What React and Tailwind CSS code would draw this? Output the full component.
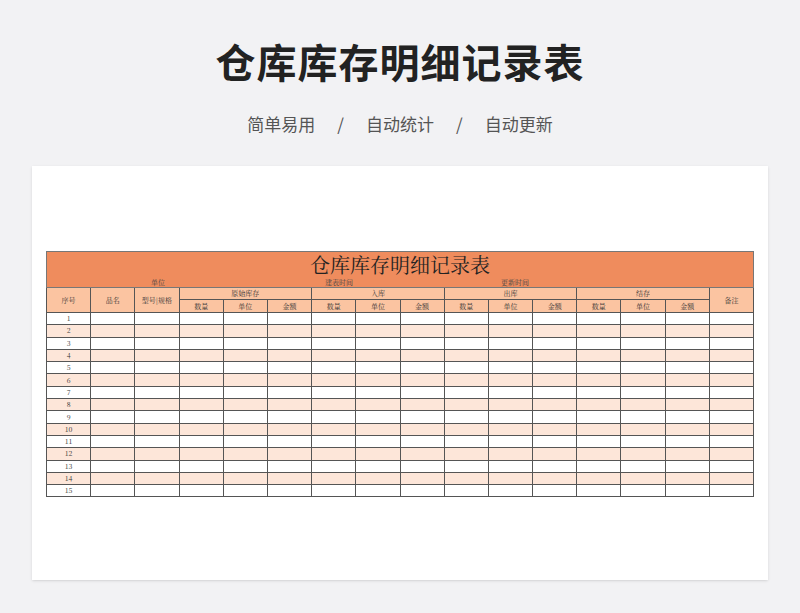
export default function App() {
  const sub = ["数量", "单位", "金额"];
  const groups = ["原始库存", "入库", "出库", "结存"];
  const cell = "border border-[#555] p-0";
  return (
    <div className="w-[800px] h-[613px] bg-[#f2f2f4] flex flex-col items-center" style={{ fontFamily: '"Noto Sans CJK SC", sans-serif' }}>
      <div className="mt-[33px] text-[40px] leading-[56px] font-bold text-[#222] tracking-[1px]">仓库库存明细记录表</div>
      <div className="mt-[23px] text-[17px] leading-[24px] text-[#555] flex gap-[22px]">
        <span>简单易用</span><span>/</span><span>自动统计</span><span>/</span><span>自动更新</span>
      </div>
      <div className="mt-[30px] w-[736px] h-[414px] bg-white shadow-sm pt-[85px] px-[14px]">
        <table className="w-[708px] border-collapse table-fixed text-[7px] text-[#333]" style={{ fontFamily: '"Noto Serif CJK SC", "Noto Sans CJK SC", serif' }}>
          <tbody>
            <tr className="h-[25px] bg-[#ef8c5d]">
              <td colSpan={16} className="border border-[#777] border-b-0 p-0 text-center text-[20px] leading-[25px] text-[#222] overflow-hidden">仓库库存明细记录表</td>
            </tr>
            <tr className="h-[10px] bg-[#ef8c5d]">
              <td colSpan={16} className="border border-[#777] border-t-0 p-0 leading-[10px]">
                <div className="flex text-[#444] h-[10px] items-center">
                  <span className="ml-[104px]">单位</span>
                  <span className="ml-[160px]">建表时间</span>
                  <span className="ml-[148px]">更新时间</span>
                </div>
              </td>
            </tr>
            <tr className="h-[12px] bg-[#fbc4a1]">
              <td rowSpan={2} className={cell + " text-center"}>序号</td>
              <td rowSpan={2} className={cell + " text-center"}>品名</td>
              <td rowSpan={2} className={cell + " text-center"}>型号|规格</td>
              {groups.map(g => <td key={g} colSpan={3} className={cell + " text-center leading-[11px]"}>{g}</td>)}
              <td rowSpan={2} className={cell + " text-center"}>备注</td>
            </tr>
            <tr className="h-[13px] bg-[#fbc4a1]">
              {groups.flatMap(g => sub.map(s => <td key={g + s} className={cell + " text-center leading-[12px]"}>{s}</td>))}
            </tr>
            {Array.from({ length: 15 }, (_, i) => (
              <tr key={i} className={"h-[12.3px] " + (i % 2 ? "bg-[#fde6d9]" : "bg-white")}>
                <td className={cell + " text-center leading-[11px]"}>{i + 1}</td>
                {Array.from({ length: 15 }, (_, j) => <td key={j} className={cell}></td>)}
              </tr>
            ))}
          </tbody>
        </table>
      </div>
    </div>
  );
}
